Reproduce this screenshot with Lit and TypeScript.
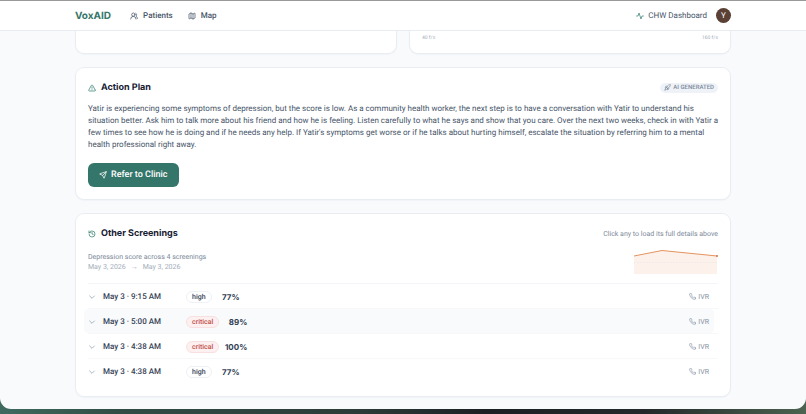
import { LitElement, html, css, svg } from "lit";
import { customElement, property } from "lit/decorators.js";
import { classMap } from "lit/directives/class-map.js";

const ICONS: Record<string, unknown> = {
  users: svg`<path d="M18 21a8 8 0 0 0-16 0"/><circle cx="10" cy="8" r="5"/><path d="M22 20c0-3.37-2-6.5-4-8a5 5 0 0 0-.45-8.3"/>`,
  map: svg`<path d="M14.106 5.553a2 2 0 0 0 1.788 0l3.659-1.83A1 1 0 0 1 21 4.619v12.764a1 1 0 0 1-.553.894l-4.553 2.277a2 2 0 0 1-1.788 0l-4.212-2.106a2 2 0 0 0-1.788 0l-3.659 1.83A1 1 0 0 1 3 19.381V6.618a1 1 0 0 1 .553-.894l4.553-2.277a2 2 0 0 1 1.788 0z"/><path d="M15 5.764v15"/><path d="M9 3.236v15"/>`,
  activity: svg`<path d="M22 12h-4l-3 9L9 3l-3 9H2"/>`,
  alert: svg`<path d="m21.73 18-8-14a2 2 0 0 0-3.48 0l-8 14A2 2 0 0 0 4 21h16a2 2 0 0 0 1.730-3"/><path d="M12 9v4"/><path d="M12 17h.01"/>`,
  rocket: svg`<path d="M4.500 16.500c-1.500 1.260-2 5-2 5s3.740-.5 5-2c.710-.840.700-2.130-.090-2.910a2.180 2.180 0 0 0-2.910-.090z"/><path d="m12 15-3-3a22 22 0 0 1 2-3.950A12.880 12.880 0 0 1 22 2c0 2.720-.780 7.500-6 11a22.350 22.350 0 0 1-4 2z"/><path d="M9 12H4s.550-3.030 2-4c1.620-1.080 5 0 5 0"/><path d="M12 15v5s3.030-.550 4-2c1.080-1.620 0-5 0-5"/>`,
  send: svg`<path d="M14.536 21.686a.5.5 0 0 0 .937-.024l6.500-19a.496.496 0 0 0-.635-.635l-19 6.500a.5.5 0 0 0-.024.937l7.930 3.180a2 2 0 0 1 1.112 1.110z"/><path d="m21.854 2.147-10.940 10.939"/>`,
  history: svg`<path d="M3 12a9 9 0 1 0 9-9 9.750 9.750 0 0 0-6.740 2.740L3 8"/><path d="M3 3v5h5"/><path d="M12 7v5l4 2"/>`,
  chevron: svg`<path d="m5 9 7 7 7-7"/>`,
  phone: svg`<path d="M22 16.920v3a2 2 0 0 1-2.180 2 19.790 19.790 0 0 1-8.630-3.070 19.500 19.500 0 0 1-6-6 19.790 19.790 0 0 1-3.070-8.670A2 2 0 0 1 4.110 2h3a2 2 0 0 1 2 1.720 12.840 12.840 0 0 0 .7 2.810 2 2 0 0 1-.450 2.110L8.090 9.910a16 16 0 0 0 6 6l1.270-1.270a2 2 0 0 1 2.110-.450 12.840 12.840 0 0 0 2.810.7A2 2 0 0 1 22 16.920z"/>`,
};

@customElement("line-icon")
class LineIcon extends LitElement {
  @property() name = "";
  static styles = css`
    :host { display: block; flex: none; width: 8px; height: 8px; }
    svg { display: block; width: 100%; height: 100%; fill: none; stroke: currentColor; stroke-width: 2.2; stroke-linecap: round; stroke-linejoin: round; }
  `;
  render() {
    return html`<svg viewBox="0 0 24 24" aria-hidden="true">${ICONS[this.name]}</svg>`;
  }
}

interface Screening {
  when: string;
  level: "high" | "critical";
  score: number;
  active?: boolean;
}

const SCREENINGS: Screening[] = [
  { when: "May 3 · 9:15 AM", level: "high", score: 77 },
  { when: "May 3 · 5:00 AM", level: "critical", score: 89, active: true },
  { when: "May 3 · 4:38 AM", level: "critical", score: 100 },
  { when: "May 3 · 4:38 AM", level: "high", score: 77 },
];

@customElement("app-root")
class AppRoot extends LitElement {
  static styles = css`
    :host {
      display: block;
      min-height: 100vh;
      box-sizing: border-box;
      padding-bottom: 5px;
      background: linear-gradient(90deg, #3f6b5f 0, #304c44 15%, #2c3b37 45%, #1c2024 60%, #24282a 80%, #4b6350 100%);
      font-family: Roboto, "Liberation Sans", sans-serif;
      font-size: 8px;
      line-height: 12px;
      color: #475569;
      text-rendering: geometricPrecision;
    }
    *, *::before, *::after { box-sizing: border-box; }
    h2, p, ul { margin: 0; padding: 0; }
    ul { list-style: none; }
    button { font: inherit; text-rendering: inherit; border: 0; cursor: pointer; }
    a { color: inherit; text-decoration: none; }
    .window {
      background: #f8fafc;
      border-top: 1px solid #999;
      border-radius: 0 0 11px 11px;
      overflow: hidden;
      padding-bottom: 12px;
    }
    .inner { max-width: 656px; margin: 0 auto; }
    .brand, .title, .score { font-family: Inter, "Liberation Sans", sans-serif; }
    header { background: #fff; border-bottom: 1px solid #e8ecf1; }
    .bar { display: flex; align-items: center; height: 29px; }
    .brand { font-size: 10px; font-weight: 700; color: #35766a; margin-right: 19px; }
    .link { display: flex; align-items: center; gap: 5px; font-weight: 500; margin-right: 15px; }
    .account { display: flex; align-items: center; gap: 4px; margin-left: auto; }
    .account line-icon, .title line-icon { color: #35806f; }
    .avatar { width: 15px; height: 15px; padding: 0; margin-left: 5px; border-radius: 50%; background: #5a4035; color: #fff; line-height: 15px; text-align: center; }
    main { display: grid; gap: 13px; }
    .pair { display: grid; grid-template-columns: 1fr 1fr; gap: 12px; }
    .card { background: #fff; border: 1px solid #e9edf2; border-radius: 9px; padding: 12px; box-shadow: 0 1px 1px #f1f4f7; }
    .cut { border-top: 0; border-radius: 0 0 9px 9px; padding: 3px 12px 12px; height: 23px; }
    .axis { display: flex; justify-content: space-between; font-size: 5px; line-height: 8px; color: #a3adba; }
    .head { display: flex; justify-content: space-between; align-items: center; height: 15px; }
    .title { display: flex; align-items: center; gap: 5px; font-size: 9px; font-weight: 700; color: #172033; }
    .tag { display: flex; align-items: center; gap: 2px; height: 10px; padding: 0 4px; border-radius: 5px; background: #eff3f8; color: #7c899b; font-size: 6px; font-weight: 500; line-height: 10px; }
    .tag line-icon { width: 7px; height: 7px; }
    .plan { margin: 8px -2px 12px 0; }
    .refer { display: flex; align-items: center; gap: 4px; height: 24px; padding: 0 11px; border-radius: 6px; background: #35766a; color: #fff; font-size: 9px; font-weight: 500; }
    .hint { font-size: 7px; color: #7d899a; }
    .trend { display: flex; justify-content: space-between; align-items: center; height: 26px; margin: 7px 0 9px; font-size: 7px; line-height: 10px; color: #7d899a; }
    .caption { padding-top: 2px; }
    .range { display: flex; gap: 5px; color: #a3adba; }
    .spark { display: block; width: 85px; height: 26px; }
    .rows { border-top: 1px solid #f3f5f8; }
    .rows li { height: 25px; }
    .rows li:not(:last-child) { border-bottom: 1px solid #f6f8fa; }
    .row { display: flex; align-items: center; width: 100%; height: 24px; margin-left: -4px; padding: 1px 5px 0 4px; background: none; color: #334155; border-radius: 4px; }
    .row.active { background: #f8fafc; }
    .row > line-icon { color: #8c98a8; margin-right: 7px; }
    .when { width: 83px; text-align: left; font-weight: 500; }
    .level { height: 12px; padding: 0 5px; border: 1px solid #eef1f5; border-radius: 6px; font-size: 7px; font-weight: 500; line-height: 10px; }
    .level.critical { background: #fdf0f0; border-color: #f9e0e0; color: #c0504d; }
    .score { width: 28px; text-align: right; font-weight: 700; }
    .via { display: flex; align-items: center; gap: 2px; margin-left: auto; font-size: 7px; color: #8591a2; }
    .via line-icon { width: 7px; height: 7px; }
  `;

  render() {
    return html`
      <div class="window">
        <header>
          <div class="inner bar">
            <a class="brand" href="#">VoxAID</a>
            <a class="link" href="#patients"><line-icon name="users"></line-icon>Patients</a>
            <a class="link" href="#map"><line-icon name="map"></line-icon>Map</a>
            <div class="account">
              <line-icon name="activity"></line-icon>CHW Dashboard
              <button class="avatar" aria-label="Account">Y</button>
            </div>
          </div>
        </header>
        <main class="inner">
          <div class="pair">
            <section class="card cut"></section>
            <section class="card cut"><div class="axis"><span>40 f/s</span><span>160 f/s</span></div></section>
          </div>
          <section class="card">
            <div class="head">
              <h2 class="title"><line-icon name="alert"></line-icon>Action Plan</h2>
              <span class="tag"><line-icon name="rocket"></line-icon>AI GENERATED</span>
            </div>
            <p class="plan">
              Yatir is experiencing some symptoms of depression, but the score is low. As a community health worker, the next step is to have a conversation with Yatir to understand his situation better. Ask him to talk more about his friend and how he is feeling. Listen carefully to what he says and show that you care. Over the next two weeks, check in with Yatir a few times to see how he is doing and if he needs any help. If Yatir's symptoms get worse or if he talks about hurting himself, escalate the situation by referring him to a mental health professional right away.
            </p>
            <button class="refer"><line-icon name="send"></line-icon>Refer to Clinic</button>
          </section>
          <section class="card">
            <div class="head">
              <h2 class="title"><line-icon name="history"></line-icon>Other Screenings</h2>
              <span class="hint">Click any to load its full details above</span>
            </div>
            <div class="trend">
              <div class="caption">
                <p>Depression score across 4 screenings</p>
                <p class="range"><span>May 3, 2026</span><span>→</span><span>May 3, 2026</span></p>
              </div>
              <svg class="spark" viewBox="0 0 85 26" aria-hidden="true">
                <path d="M1 8 29 2.500 84 8V26H1Z" fill="#fdf1ec" />
                <path d="M1 14.500H84" stroke="#efe6e4" stroke-dasharray="2 1" stroke-width=".6" />
                <path d="M1 8 29 2.500 84 8" fill="none" stroke="#e3935f" />
                <circle cx="84" cy="8" r="1" fill="#d9773f" />
              </svg>
            </div>
            <ul class="rows">
              ${SCREENINGS.map(
                (s) => html`<li>
                  <button class=${classMap({ row: true, active: !!s.active })}>
                    <line-icon name="chevron"></line-icon>
                    <span class="when">${s.when}</span>
                    <span class=${classMap({ level: true, critical: s.level === "critical" })}>${s.level}</span>
                    <span class="score">${s.score}%</span>
                    <span class="via"><line-icon name="phone"></line-icon>IVR</span>
                  </button>
                </li>`
              )}
            </ul>
          </section>
        </main>
      </div>
    `;
  }
}
